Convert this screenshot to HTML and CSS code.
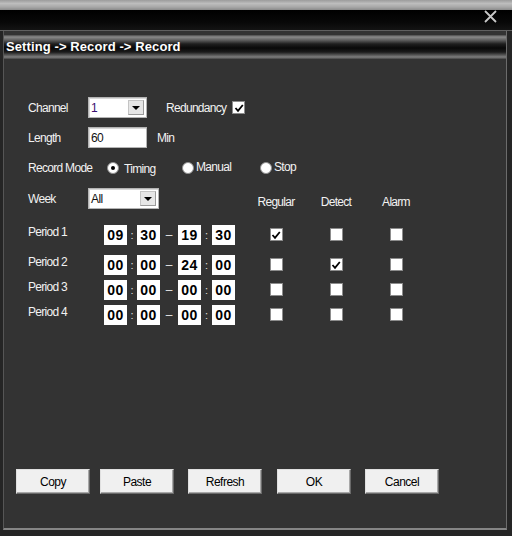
FILE: index.html
```html
<!DOCTYPE html>
<html>
<head>
<meta charset="utf-8">
<link rel="stylesheet" href="styles.css">
</head>
<body>
<div class="topstrip"></div>
<div class="caption">
  <svg class="close" width="13" height="13" viewBox="0 0 13 13"><path d="M1 1 L12 12 M12 1 L1 12" stroke="#c8c8c8" stroke-width="1.8" fill="none"/></svg>
</div>
<div class="frame">
  <div class="inner">
    <div class="titlebar">Setting -&gt; Record -&gt; Record</div>
    <div class="form">
      <div class="row r1">
        <span class="label lw60">Channel</span>
        <div class="select w59"><span class="val purple">1</span><span class="drop"><span class="tri"></span></span></div>
        <span class="label redund">Redundancy</span>
        <span class="check on"><svg viewBox="0 0 10 10"><path d="M1.5 5 L4 7.8 L8.8 2" stroke="#000" stroke-width="1.8" fill="none"/></svg></span>
      </div>
      <div class="row r2">
        <span class="label lw60">Length</span>
        <div class="input w59"><span class="val">60</span></div>
        <span class="label min">Min</span>
      </div>
      <div class="row r3">
        <span class="label lw79">Record Mode</span>
        <span class="opt o1"><span class="radio sel"></span><span class="label">Timing</span></span>
        <span class="opt o2"><span class="radio"></span><span class="label up">Manual</span></span>
        <span class="opt"><span class="radio"></span><span class="label up">Stop</span></span>
      </div>
      <div class="row r4">
        <span class="label lw60">Week</span>
        <div class="select w71"><span class="val">All</span><span class="drop"><span class="tri"></span></span></div>
        <span class="heads">
          <span class="head">Regular</span>
          <span class="head">Detect</span>
          <span class="head">Alarm</span>
        </span>
      </div>
      <div class="period p1">
        <span class="label plabel">Period 1</span>
        <span class="times"><span class="tb">09</span><span class="sep">:</span><span class="tb">30</span><span class="dash">–</span><span class="tb">19</span><span class="sep s2">:</span><span class="tb">30</span></span>
        <span class="cell"><span class="check on"><svg viewBox="0 0 10 10"><path d="M1.5 5 L4 7.8 L8.8 2" stroke="#000" stroke-width="1.8" fill="none"/></svg></span></span>
        <span class="cell"><span class="check"></span></span>
        <span class="cell"><span class="check"></span></span>
      </div>
      <div class="period p2">
        <span class="label plabel">Period 2</span>
        <span class="times"><span class="tb">00</span><span class="sep">:</span><span class="tb">00</span><span class="dash">–</span><span class="tb">24</span><span class="sep s2">:</span><span class="tb">00</span></span>
        <span class="cell"><span class="check"></span></span>
        <span class="cell"><span class="check on"><svg viewBox="0 0 10 10"><path d="M1.5 5 L4 7.8 L8.8 2" stroke="#000" stroke-width="1.8" fill="none"/></svg></span></span>
        <span class="cell"><span class="check"></span></span>
      </div>
      <div class="period">
        <span class="label plabel">Period 3</span>
        <span class="times"><span class="tb">00</span><span class="sep">:</span><span class="tb">00</span><span class="dash">–</span><span class="tb">00</span><span class="sep s2">:</span><span class="tb">00</span></span>
        <span class="cell"><span class="check"></span></span>
        <span class="cell"><span class="check"></span></span>
        <span class="cell"><span class="check"></span></span>
      </div>
      <div class="period">
        <span class="label plabel">Period 4</span>
        <span class="times"><span class="tb">00</span><span class="sep">:</span><span class="tb">00</span><span class="dash">–</span><span class="tb">00</span><span class="sep s2">:</span><span class="tb">00</span></span>
        <span class="cell"><span class="check"></span></span>
        <span class="cell"><span class="check"></span></span>
        <span class="cell"><span class="check"></span></span>
      </div>
    </div>
    <div class="buttons">
      <button class="btn">Copy</button>
      <button class="btn">Paste</button>
      <button class="btn">Refresh</button>
      <button class="btn">OK</button>
      <button class="btn">Cancel</button>
    </div>
  </div>
</div>
</body>
</html>
```

FILE: styles.css
```css
* { box-sizing: border-box; }
html, body { margin: 0; padding: 0; }
body {
  width: 512px;
  height: 536px;
  overflow: hidden;
  background: #1a1a1a;
  font-family: "Liberation Sans", Arial, sans-serif;
  font-size: 12px;
}
.topstrip {
  height: 10px;
  background: linear-gradient(to bottom, #9c9c9c 0, #bdbdbd 35%, #a8a8a8 70%, #8a8a8a 100%);
}
.caption {
  height: 20px;
  background: linear-gradient(to bottom, #000 0, #080808 60%, #141414 100%);
  display: flex;
  justify-content: flex-end;
  align-items: flex-start;
  padding-right: 15px;
}
.close { display: block; }
.frame {
  height: 506px;
  background: #252525;
  border-top: 1px solid #606060;
  padding: 0 5px 6px 3px;
  display: flex;
  flex-direction: column;
}
.inner {
  flex: 1;
  background: #333333;
  border-left: 1px solid #565656;
  border-right: 1px solid #6c6c6c;
  border-bottom: 2px solid #858585;
  padding-top: 4px;
  display: flex;
  flex-direction: column;
}
.titlebar {
  height: 24px;
  background: linear-gradient(to bottom, #4a4a4a 0, #8a8a8a 2px, #606060 5px, #1e1e1e 9px, #080808 13px, #1a1a1a 17px, #555 20px, #7e7e7e 22px, #444 24px);
  color: #fff;
  font-weight: bold;
  font-size: 13px;
  line-height: 24px;
  padding-left: 2px;
  letter-spacing: 0.1px;
}
.form {
  padding-left: 24px;
  padding-top: 38px;
  display: flex;
  flex-direction: column;
}
.row {
  display: flex;
  align-items: center;
  height: 21px;
}
.r2, .r3 { margin-top: 9px; }
.r4 { margin-top: 10px; }
.label {
  color: #f2f2f2;
  letter-spacing: -0.7px;
  white-space: nowrap;
}
.lw60 { width: 60px; }
.lw79 { width: 79px; }
.select, .input {
  height: 21px;
  background: #fff;
  border: 1px solid #b4b4b4;
  box-shadow: inset 1px 1px 0 #d8d8d8;
  display: flex;
  align-items: center;
  position: relative;
}
.w59 { width: 59px; }
.w71 { width: 71px; }
.val {
  color: #111;
  padding-left: 2px;
  letter-spacing: -0.6px;
  flex: 1;
}
.purple { color: #3a1070; }
.drop {
  width: 16px;
  height: 15px;
  margin-right: 2px;
  background: #e6e6e6;
  border: 1px solid #c4c4c4;
  border-right-color: #9a9a9a;
  border-bottom-color: #9a9a9a;
  display: flex;
  align-items: center;
  justify-content: center;
}
.tri {
  width: 0;
  height: 0;
  border-left: 4px solid transparent;
  border-right: 4px solid transparent;
  border-top: 4px solid #000;
}
.redund { margin-left: 19px; }
.check {
  width: 13px;
  height: 13px;
  background: #fff;
  border: 1px solid #8c8c8c;
  display: inline-flex;
  align-items: center;
  justify-content: center;
  margin-left: 6px;
}
.check svg { width: 10px; height: 10px; display: block; }
.min { margin-left: 10px; }
.opt {
  display: flex;
  align-items: center;
}
.o1 { width: 75px; }
.o2 { width: 78px; }
.radio {
  width: 12px;
  height: 12px;
  border-radius: 50%;
  background: #fff;
  border: 1px solid #909090;
  margin-right: 2px;
  display: flex;
  align-items: center;
  justify-content: center;
}
.o1 .radio { margin-right: 5px; }
.radio.sel::after {
  content: "";
  width: 4px;
  height: 4px;
  border-radius: 50%;
  background: #000;
}
.up { position: relative; top: -1px; }
.o1 .label { position: relative; top: 1px; }
.heads {
  display: flex;
  margin-left: 87px;
  margin-top: 7px;
}
.head {
  width: 60px;
  text-align: center;
  color: #f2f2f2;
  letter-spacing: -0.7px;
}
.period {
  display: flex;
  align-items: center;
  height: 25px;
}
.p1 { margin-top: 13px; }
.p2 { margin-top: 5px; }
.plabel {
  width: 76px;
  margin-bottom: 5px;
}
.times {
  display: flex;
  align-items: center;
  width: 142px;
}
.tb {
  width: 23px;
  height: 20px;
  background: #fff;
  color: #000;
  font-weight: bold;
  font-size: 14px;
  line-height: 20px;
  text-align: center;
  letter-spacing: 0.5px;
}
.sep {
  width: 10px;
  text-align: center;
  color: #e0e0e0;
  font-size: 11px;
}
.s2 { width: 11px; }
.dash {
  width: 18px;
  text-align: center;
  color: #e8e8e8;
  font-size: 12px;
}
.cell {
  width: 60px;
  display: flex;
  justify-content: center;
}
.cell .check { margin-left: 0; }
.buttons {
  margin-top: 142px;
  padding-left: 12px;
  display: flex;
}
.btn {
  width: 74px;
  height: 25px;
  background: #f0f0f0;
  border: 1px solid #e0e0e0;
  border-right-color: #6a6a6a;
  border-bottom-color: #6a6a6a;
  box-shadow: inset -1px -1px 0 #a8a8a8;
  font-family: "Liberation Sans", Arial, sans-serif;
  font-size: 12px;
  letter-spacing: -0.5px;
  color: #000;
  padding: 0;
  margin: 0;
}
.btn:nth-child(2) { margin-left: 10px; }
.btn:nth-child(3) { margin-left: 14px; }
.btn:nth-child(4) { margin-left: 15px; }
.btn:nth-child(5) { margin-left: 14px; }
```
